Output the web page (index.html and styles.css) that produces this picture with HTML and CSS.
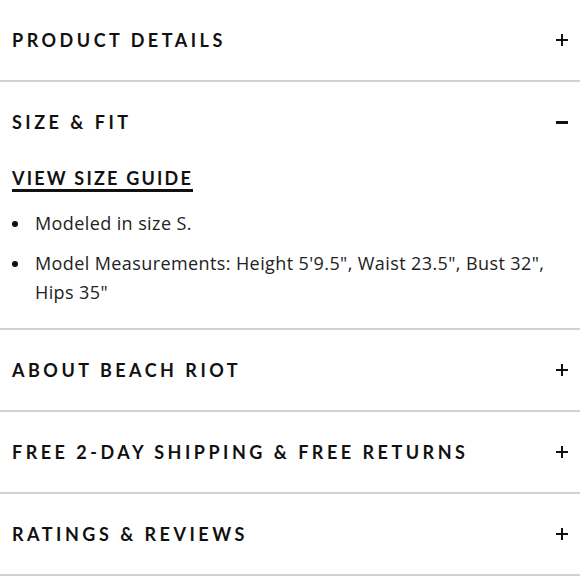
FILE: index.html
```html
<!DOCTYPE html>
<html>
<head>
<meta charset="utf-8">
<link rel="stylesheet" href="styles.css">
</head>
<body>
<div class="accordion">
  <section class="panel">
    <div class="panel-head"><span class="title">PRODUCT DETAILS</span><span class="icon plus"></span></div>
  </section>
  <section class="panel open">
    <div class="panel-head"><span class="title">SIZE &amp; FIT</span><span class="icon minus"></span></div>
    <div class="panel-body">
      <a class="guide">VIEW SIZE GUIDE</a>
      <ul class="list">
        <li><span>Modeled in size S.</span></li>
        <li><span>Model Measurements: Height 5'9.5", Waist 23.5", Bust 32", Hips 35"</span></li>
      </ul>
    </div>
  </section>
  <section class="panel">
    <div class="panel-head"><span class="title">ABOUT BEACH RIOT</span><span class="icon plus"></span></div>
  </section>
  <section class="panel">
    <div class="panel-head"><span class="title">FREE 2-DAY SHIPPING &amp; FREE RETURNS</span><span class="icon plus"></span></div>
  </section>
  <section class="panel">
    <div class="panel-head"><span class="title">RATINGS &amp; REVIEWS</span><span class="icon plus"></span></div>
  </section>
</div>
</body>
</html>
```
FILE: styles.css
```css
html, body {
  margin: 0;
  padding: 0;
  background: #fff;
}
body {
  font-family: "Lato", "Liberation Sans", sans-serif;
  color: #111;
}
.accordion {
  border-top: 1px solid #f0f0f0;
  margin-top: -1px;
}
.panel {
  border-bottom: 2px solid #d2d2d2;
}
.panel-head {
  height: 80px;
  display: flex;
  align-items: center;
  justify-content: space-between;
  padding: 0 12px;
}
.title {
  font-family: "Lato", "Liberation Sans", sans-serif;
  font-weight: 700;
  font-size: 18px;
  letter-spacing: 3.5px;
  color: #111;
}
.icon {
  position: relative;
  width: 12px;
  height: 12px;
}
.icon::before,
.icon::after {
  content: "";
  position: absolute;
  background: #111;
}
.icon::before {
  left: 0;
  top: 5px;
  width: 12px;
  height: 2px;
}
.plus::after {
  left: 5px;
  top: 0;
  width: 2px;
  height: 12px;
}
.minus::before {
  height: 3px;
}
.panel-body {
  padding: 0 12px 21px;
}
.guide {
  display: inline-block;
  white-space: nowrap;
  margin-top: 5px;
  font-weight: 700;
  font-size: 18px;
  letter-spacing: 2.2px;
  line-height: 22px;
  border-bottom: 3px solid #111;
  color: #111;
}
.list {
  list-style: none;
  margin: 17px 0 0;
  padding: 0;
  font-family: "Open Sans", "Liberation Sans", sans-serif;
  font-size: 18px;
  letter-spacing: 0.4px;
  line-height: 29px;
  color: #222;
}
.list li {
  display: flex;
  align-items: flex-start;
  gap: 17px;
}
.list li::before {
  content: "";
  flex: none;
  width: 6px;
  height: 6px;
  border-radius: 50%;
  background: #111;
  margin-top: 12px;
}
.list li + li {
  margin-top: 11px;
}
```
